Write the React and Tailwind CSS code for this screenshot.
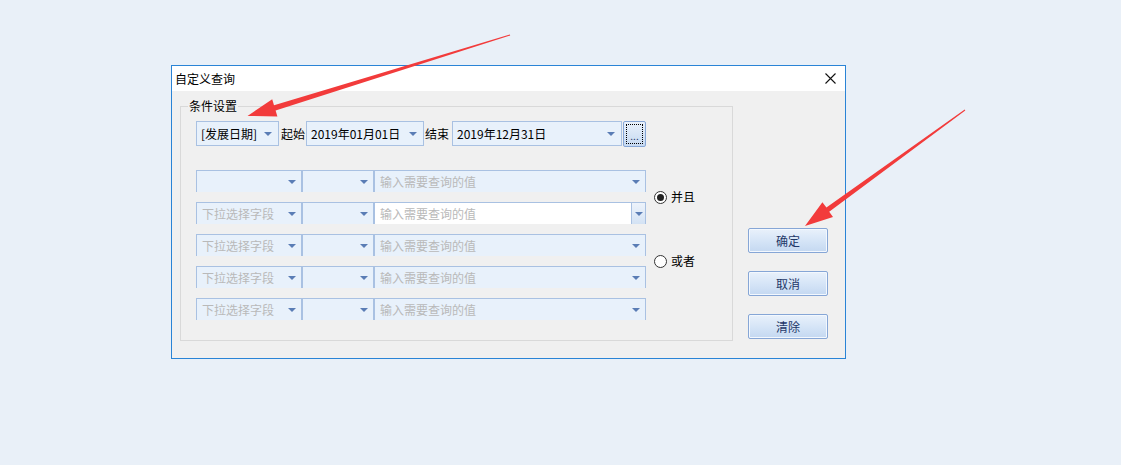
import React from 'react';

const font = "font-['Noto_Sans_CJK_SC','Noto_Sans',sans-serif]";

function DropArrow() {
    return (
        <span className="w-0 h-0 border-l-[4px] border-r-[4px] border-t-[4px] border-l-transparent border-r-transparent border-t-[#5a7db5]" />
    );
}

function Combo({ className = '', text, muted }) {
    return (
        <div className={`flex items-center justify-between bg-[#e8f1fb] border border-[#a9c1e2] pl-[4px] pr-[6px] ${className}`}>
            <span className={`text-[12px] leading-none whitespace-nowrap ${muted ? 'text-[#b9b9b9]' : 'text-black'}`}>{text}</span>
            <DropArrow />
        </div>
    );
}

function Cell({ className = '', text, focused }) {
    if (focused) {
        return (
            <div className={`flex items-stretch bg-white border-t border-l border-r border-[#a9c1e2] ${className}`}>
                <span className="flex-1 flex items-center pl-[5px] text-[12px] leading-none text-[#b9b9b9] whitespace-nowrap">{text}</span>
                <span className="w-[14px] flex items-center justify-center border-l border-[#a9c1e2] bg-gradient-to-b from-[#edf3fb] to-[#d3e2f4]">
                    <DropArrow />
                </span>
            </div>
        );
    }
    return (
        <div className={`flex items-center justify-between bg-[#e8f1fb] border-t border-l border-r border-[#a9c1e2] pl-[5px] pr-[5px] ${className}`}>
            <span className="text-[12px] leading-none text-[#b9b9b9] whitespace-nowrap">{text}</span>
            <DropArrow />
        </div>
    );
}

function Radio({ label, checked }) {
    return (
        <div className="flex items-center h-[16px] gap-[4px]">
            <span className="w-[13px] h-[13px] rounded-full border border-[#333] bg-white flex items-center justify-center">
                {checked && <span className="w-[7px] h-[7px] rounded-full bg-[#222]" />}
            </span>
            <span className="text-[12px] leading-none text-black">{label}</span>
        </div>
    );
}

function Button({ children }) {
    return (
        <button className="w-[80px] h-[25px] rounded-[2px] border border-[#86a6d6] bg-gradient-to-b from-[#e9f1fb] via-[#d6e5f7] to-[#c4d8f1] text-[12px] leading-none text-[#1e3768] shadow-[inset_0_0_0_1px_#f3f8fe]">
            {children}
        </button>
    );
}

const rows = [
    { field: '', focused: false },
    { field: '下拉选择字段', focused: true },
    { field: '下拉选择字段', focused: false },
    { field: '下拉选择字段', focused: false },
    { field: '下拉选择字段', focused: false },
];

export default function App() {
    return (
        <div className={`relative w-[1121px] h-[465px] overflow-hidden bg-[#e9f0f8] ${font}`}>
            <div className="pt-[65px] pl-[171px]">
                {/* Dialog */}
                <div className="w-[675px] h-[294px] border border-[#2a84d6] bg-[#f0f0f0] flex flex-col">
                    <div className="h-[25px] bg-white flex items-center justify-between pl-[3px] pr-[8px]">
                        <span className="text-[12px] leading-none text-black">自定义查询</span>
                        <svg width="11" height="11" viewBox="0 0 11 11" className="mr-[1px]">
                            <path d="M0.5 0.5 L10.5 10.5 M10.5 0.5 L0.5 10.5" stroke="#111" strokeWidth="1.1" />
                        </svg>
                    </div>

                    <div className="flex pt-[7px] pl-[8px]">
                        {/* Group box */}
                        <fieldset className="w-[553px] border border-[#d9d9d9] p-0 m-0">
                            <legend className="ml-[7px] px-[1px] text-[12px] leading-[16px] text-black">条件设置</legend>
                            <div className="h-[226px] pl-[15px] pt-[7px]">
                                <div className="flex items-center h-[25px]">
                                    <Combo className="w-[83px] h-[25px]" text="[发展日期]" />
                                    <span className="ml-[2px] w-[24px] text-[12px] leading-none text-black">起始</span>
                                    <Combo className="ml-[1px] w-[118px] h-[25px]" text="2019年01月01日" />
                                    <span className="ml-[1px] w-[24px] text-[12px] leading-none text-black">结束</span>
                                    <Combo className="ml-[3px] w-[170px] h-[25px]" text="2019年12月31日" />
                                    <button className="ml-[1px] w-[23px] h-[26px] rounded-[2px] border border-[#86a6d6] bg-gradient-to-b from-[#e9f1fb] to-[#c6d9f1] p-[2px]">
                                        <span className="flex items-end justify-center w-full h-full border border-dotted border-black text-[10px] leading-[14px] text-[#1e3768]">...</span>
                                    </button>
                                </div>

                                <div className="flex mt-[24px]">
                                    <div className="flex flex-col gap-[10px]">
                                        {rows.map((r, i) => (
                                            <div key={i} className="flex h-[22px]">
                                                <Cell className="w-[106px]" text={r.field} />
                                                <Cell className="w-[72px]" text="" />
                                                <Cell className="w-[272px]" text="输入需要查询的值" focused={r.focused} />
                                            </div>
                                        ))}
                                    </div>
                                    <div className="ml-[8px] pt-[19px] flex flex-col gap-[48px]">
                                        <Radio label="并且" checked />
                                        <Radio label="或者" />
                                    </div>
                                </div>
                            </div>
                        </fieldset>

                        {/* Buttons */}
                        <div className="ml-[15px] pt-[130px] flex flex-col gap-[18px]">
                            <Button>确定</Button>
                            <Button>取消</Button>
                            <Button>清除</Button>
                        </div>
                    </div>
                </div>
            </div>

            {/* Annotation arrows */}
            <svg className="absolute inset-0 pointer-events-none" width="1121" height="465" viewBox="0 0 1121 465">
                <polygon
                    fill="#f23b3b"
                    points="510.2,35.5 509.8,34.5 274.0,105.3 272.2,99.2 247.5,116 277.4,116.4 275.6,110.4"
                />
                <polygon
                    fill="#f23b3b"
                    points="965.3,110.4 964.7,109.6 826.4,207.5 822.4,202.3 805,226 833,216.9 829.2,211.7"
                />
            </svg>
        </div>
    );
}
